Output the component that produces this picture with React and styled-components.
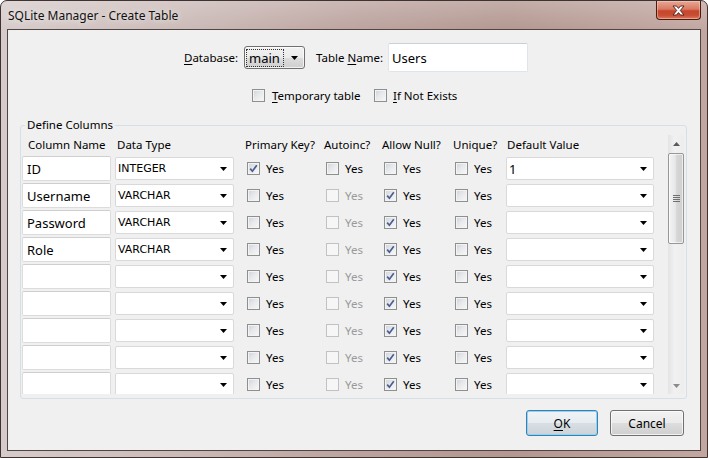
import React from "react";
import styled, { createGlobalStyle } from "styled-components";

const GlobalStyle = createGlobalStyle`
  html, body {
    margin: 0;
    padding: 0;
    background: #ffffff;
  }
  body {
    font-family: "Noto Sans", "DejaVu Sans", sans-serif;
    font-size: 12px;
    color: #000;
  }
  * {
    box-sizing: border-box;
  }
`;

const Window = styled.div`
  width: 708px;
  height: 458px;
  display: flex;
  flex-direction: column;
  padding: 0 6px 6px;
  border: 1px solid #3d3331;
  border-radius: 7px 7px 0 0;
  background:
    linear-gradient(to bottom, rgba(255, 255, 255, 0.22), rgba(255, 255, 255, 0) 30px),
    linear-gradient(to right, #d6cccb 0%, #cbbbb8 25%, #bca39f 50%, #b39790 72%, #c2a7a1 100%);
  overflow: hidden;
`;

const TitleBar = styled.div`
  height: 28px;
  display: flex;
  align-items: center;
  padding-left: 1px;
`;

const Title = styled.span`
  font-size: 12px;
  color: #111;
  text-shadow: 0 0 6px rgba(255, 255, 255, 0.9);
`;

const CloseButton = styled.div`
  margin-left: auto;
  align-self: flex-start;
  width: 45px;
  height: 19px;
  border: 1px solid #4a1a12;
  border-top: none;
  border-radius: 0 0 4px 4px;
  background: linear-gradient(to bottom, #e9a797 0%, #d97a62 45%, #c6462c 55%, #c84f33 80%, #dc7a5c 100%);
  box-shadow: inset 0 0 0 1px rgba(255, 220, 200, 0.45);
  display: flex;
  align-items: center;
  justify-content: center;
`;

const Client = styled.div`
  flex: 1;
  display: flex;
  flex-direction: column;
  background: #f0f0f0;
  border: 1px solid #514543;
`;

const TopRow = styled.div`
  margin-top: 13px;
  height: 29px;
  padding-left: 176px;
  display: flex;
  align-items: center;
`;

const FieldLabel = styled.span`
  width: ${(p) => p.$width}px;
  margin-left: ${(p) => p.$offset || 0}px;
  flex: none;
  white-space: nowrap;
  font-size: 11.5px;
`;

const Key = styled.span`
  text-decoration: underline;
  text-underline-offset: 2px;
`;

const DbSelect = styled.div`
  width: 61px;
  height: 23px;
  flex: none;
  border: 1px solid #707070;
  border-radius: 3px;
  background: linear-gradient(to bottom, #f2f2f2 0%, #ebebeb 50%, #dddddd 51%, #cfcfcf 100%);
  box-shadow: inset 0 0 0 1px rgba(255, 255, 255, 0.7);
  display: flex;
  align-items: center;
  padding: 0 6px 0 1px;
`;

const FocusText = styled.span`
  flex: 1;
  height: 18px;
  border: 1px dotted #333;
  padding-left: 2px;
  display: flex;
  align-items: center;
  font-size: 13px;
  margin-right: 7px;
`;

const NameInput = styled.div`
  width: 140px;
  height: 29px;
  flex: none;
  background: #fff;
  border: 1px solid #dfe5ea;
  border-top-color: #c9d0d8;
  border-radius: 2px;
  display: flex;
  align-items: center;
  padding-left: 3px;
  font-size: 13px;
`;

const OptionsRow = styled.div`
  margin-top: 16px;
  height: 15px;
  padding-left: 244px;
  display: flex;
  align-items: center;
`;

const CheckLabel = styled.label`
  display: flex;
  align-items: center;
  gap: ${(p) => p.$gap || 7}px;
  width: ${(p) => (p.$width ? `${p.$width}px` : "auto")};
  flex: none;
  font-size: 11.5px;
  color: ${(p) => (p.$disabled ? "#9a9a9a" : "#000")};
  white-space: nowrap;
`;

const Box = styled.span`
  width: 13px;
  height: 13px;
  flex: none;
  border: 1px solid ${(p) => (p.$disabled ? "#c2c2c2" : "#8e8f8f")};
  background: ${(p) =>
    p.$disabled
      ? "#f6f6f6"
      : "linear-gradient(135deg, #cdd1d7 0%, #e6e8eb 45%, #f8f8f8 100%)"};
  box-shadow: inset 0 0 0 1px ${(p) => (p.$disabled ? "#f6f6f6" : "#f3f3f3")};
  display: flex;
  align-items: center;
  justify-content: center;
`;

const Group = styled.fieldset`
  margin: 14px 13px 0 12px;
  padding: 2px 0 4px 1px;
  border: 1px solid #d5dfe5;
  border-radius: 3px;
  min-width: 0;
`;

const Legend = styled.legend`
  margin-left: 3px;
  padding: 0 2px;
  font-size: 11.5px;
  line-height: 16px;
`;

const ScrollArea = styled.div`
  height: 259px;
  display: flex;
`;

const Viewport = styled.div`
  flex: 1;
  overflow: hidden;
`;

const Grid = styled.div`
  display: grid;
  grid-template-columns: 93px 130px 79px 58px 71px 53px 148px;
  grid-template-rows: 19px;
  grid-auto-rows: 25px;
  row-gap: 2px;
`;

const HeaderCell = styled.div`
  display: flex;
  align-items: center;
  padding-left: ${(p) => p.$pad}px;
  font-size: 11.5px;
  white-space: nowrap;
`;

const Cell = styled.div`
  display: flex;
  align-items: center;
  padding-left: ${(p) => p.$pad || 0}px;
`;

const ColInput = styled.div`
  width: 89px;
  height: 25px;
  background: #fff;
  border: 1px solid #dcdcdc;
  border-top-color: #cfcfcf;
  border-radius: 2px;
  display: flex;
  align-items: center;
  padding-left: 4px;
  font-size: 13px;
`;

const GridSelect = styled.div`
  width: ${(p) => p.$width}px;
  height: 23px;
  background: #fff;
  border: 1px solid #d9d9d9;
  border-radius: 2px;
  display: flex;
  align-items: center;
  padding: 0 6px 0 2px;
  font-family: "DejaVu Sans", sans-serif;
  font-size: 11px;
`;

const SelectText = styled.span`
  flex: 1;
  ${(p) => p.$plain && "font-family: 'Noto Sans', sans-serif; font-size: 13px;"}
`;

const ScrollBar = styled.div`
  width: 16px;
  margin-right: 2px;
  flex: none;
  display: flex;
  flex-direction: column;
  background: linear-gradient(to right, #e4e4e4 0%, #f1f1f1 40%, #ededed 100%);
`;

const ArrowButton = styled.div`
  height: 17px;
  flex: none;
  display: flex;
  align-items: center;
  justify-content: center;
`;

const Thumb = styled.div`
  margin: 1px 0 0 0;
  height: 91px;
  border: 1px solid #979797;
  border-radius: 2px;
  background: linear-gradient(to right, #f4f4f4 0%, #e7e7e7 45%, #d6d6d6 55%, #d0d0d0 100%);
  box-shadow: inset 0 0 0 1px rgba(255, 255, 255, 0.6);
  display: flex;
  align-items: center;
  justify-content: center;
`;

const Track = styled.div`
  flex: 1;
`;

const ButtonRow = styled.div`
  margin-top: 11px;
  padding-right: 16px;
  display: flex;
  justify-content: flex-end;
  gap: 12px;
`;

const Button = styled.div`
  width: ${(p) => p.$width}px;
  height: 26px;
  border: 1px solid ${(p) => (p.$focused ? "#3c7fb1" : "#707070")};
  border-radius: 3px;
  background: ${(p) =>
    p.$focused
      ? "linear-gradient(to bottom, #f0f4f7 0%, #e7ecf0 50%, #d8dfe4 51%, #cbd3d9 100%)"
      : "linear-gradient(to bottom, #f2f2f2 0%, #ebebeb 50%, #dddddd 51%, #cfcfcf 100%)"};
  box-shadow: inset 0 0 0 1px ${(p) => (p.$focused ? "#8fd3f5" : "rgba(255,255,255,0.7)")};
  display: flex;
  align-items: center;
  justify-content: center;
  font-size: 12px;
`;

const Arrow = ({ up, color = "#000" }) => (
  <svg width="7" height="4" viewBox="0 0 7 4">
    <polygon points={up ? "0,4 7,4 3.5,0" : "0,0 7,0 3.5,4"} fill={color} />
  </svg>
);

const CheckMark = () => (
  <svg width="9" height="9" viewBox="0 0 9 9">
    <path d="M1.2 4.6 L3.4 7.2 L7.8 1.2" fill="none" stroke="#4b5e92" strokeWidth="1.7" />
  </svg>
);

const CheckBox = ({ checked, disabled }) => (
  <Box $disabled={disabled}>{checked && <CheckMark />}</Box>
);

const YesCheck = ({ checked, disabled }) => (
  <Cell $pad={2}>
    <CheckLabel $gap={6} $disabled={disabled}>
      <CheckBox checked={checked} disabled={disabled} />
      Yes
    </CheckLabel>
  </Cell>
);

const columns = [
  { label: "Column Name", pad: 6 },
  { label: "Data Type", pad: 2 },
  { label: "Primary Key?", pad: 0 },
  { label: "Autoinc?", pad: 0 },
  { label: "Allow Null?", pad: 0 },
  { label: "Unique?", pad: 0 },
  { label: "Default Value", pad: 1 },
];

const emptyRow = { name: "", type: "", pk: false, ai: false, aiOff: true, nul: true, uniq: false, def: "" };

const rows = [
  { name: "ID", type: "INTEGER", pk: true, ai: false, aiOff: false, nul: false, uniq: false, def: "1" },
  { ...emptyRow, name: "Username", type: "VARCHAR" },
  { ...emptyRow, name: "Password", type: "VARCHAR" },
  { ...emptyRow, name: "Role", type: "VARCHAR" },
  emptyRow,
  emptyRow,
  emptyRow,
  emptyRow,
  emptyRow,
];

const App = () => (
  <>
    <GlobalStyle />
    <Window>
      <TitleBar>
        <Title>SQLite Manager - Create Table</Title>
        <CloseButton>
          <svg width="13" height="11" viewBox="0 0 13 11">
            <path
              d="M1 1 H4.5 L6.5 3.4 L8.5 1 H12 L8.3 5.5 L12 10 H8.5 L6.5 7.6 L4.5 10 H1 L4.7 5.5 Z"
              fill="#ffffff"
              stroke="#4a1d16"
              strokeWidth="0.9"
              strokeLinejoin="round"
            />
          </svg>
        </CloseButton>
      </TitleBar>
      <Client>
        <TopRow>
          <FieldLabel $width={60}>
            <Key>D</Key>atabase:
          </FieldLabel>
          <DbSelect>
            <FocusText>main</FocusText>
            <Arrow />
          </DbSelect>
          <FieldLabel $width={72} $offset={11}>
            Table <Key>N</Key>ame:
          </FieldLabel>
          <NameInput>Users</NameInput>
        </TopRow>

        <OptionsRow>
          <CheckLabel $width={122}>
            <CheckBox />
            <span>
              <Key>T</Key>emporary table
            </span>
          </CheckLabel>
          <CheckLabel $gap={6}>
            <CheckBox />
            <span>
              <Key>I</Key>f Not Exists
            </span>
          </CheckLabel>
        </OptionsRow>

        <Group>
          <Legend>Define Columns</Legend>
          <ScrollArea>
            <Viewport>
              <Grid>
                {columns.map((c) => (
                  <HeaderCell key={c.label} $pad={c.pad}>
                    {c.label}
                  </HeaderCell>
                ))}
                {rows.map((r, i) => (
                  <React.Fragment key={i}>
                    <Cell>
                      <ColInput>{r.name}</ColInput>
                    </Cell>
                    <Cell>
                      <GridSelect $width={119}>
                        <SelectText>{r.type}</SelectText>
                        <Arrow />
                      </GridSelect>
                    </Cell>
                    <YesCheck checked={r.pk} />
                    <YesCheck checked={r.ai} disabled={r.aiOff} />
                    <YesCheck checked={r.nul} />
                    <YesCheck checked={r.uniq} />
                    <Cell>
                      <GridSelect $width={148}>
                        <SelectText $plain>{r.def}</SelectText>
                        <Arrow />
                      </GridSelect>
                    </Cell>
                  </React.Fragment>
                ))}
              </Grid>
            </Viewport>
            <ScrollBar>
              <ArrowButton>
                <Arrow up color="#5a5a5a" />
              </ArrowButton>
              <Thumb>
                <svg width="7" height="7" viewBox="0 0 7 7">
                  <path d="M0 0.5 H7 M0 2.5 H7 M0 4.5 H7 M0 6.5 H7" stroke="#6f6f6f" strokeWidth="1" />
                </svg>
              </Thumb>
              <Track />
              <ArrowButton>
                <Arrow color="#8a8a8a" />
              </ArrowButton>
            </ScrollBar>
          </ScrollArea>
        </Group>

        <ButtonRow>
          <Button $width={72} $focused>
            <span>
              <Key>O</Key>K
            </span>
          </Button>
          <Button $width={74}>Cancel</Button>
        </ButtonRow>
      </Client>
    </Window>
  </>
);

export default App;
